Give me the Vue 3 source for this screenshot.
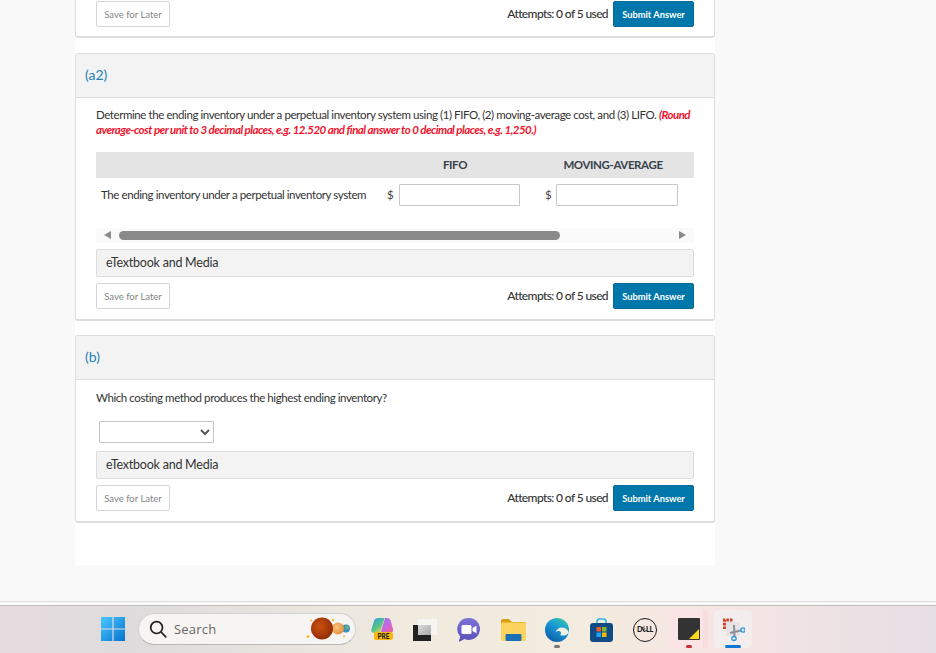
<template>
  <div class="page">
    <main class="column">
      <section class="card clipped">
        <div class="actions">
          <button class="save">Save for Later</button>
          <div class="submit-wrap">
            <span class="attempts">Attempts: 0 of 5 used</span>
            <button class="submit">Submit Answer</button>
          </div>
        </div>
      </section>

      <section class="card">
        <header class="card-head">(a2)</header>
        <div class="card-body">
          <p class="question">
            Determine the ending inventory under a perpetual inventory system using (1) FIFO, (2) moving-average cost, and (3) LIFO.
            <em class="hint">(Round</em><br />
            <em class="hint">average-cost per unit to 3 decimal places, e.g. 12.520 and final answer to 0 decimal places, e.g. 1,250.)</em>
          </p>
          <div class="table">
            <div class="thead">
              <span class="th fifo">FIFO</span>
              <span class="th moving">MOVING-AVERAGE</span>
            </div>
            <div class="trow">
              <span class="row-label">The ending inventory under a perpetual inventory system</span>
              <span class="dollar d1">$</span>
              <input class="cell c1" type="text" />
              <span class="dollar d2">$</span>
              <input class="cell c2" type="text" />
            </div>
            <div class="scrollbar">
              <span class="arrow left"></span>
              <span class="thumb"></span>
              <span class="arrow right"></span>
            </div>
          </div>
          <div class="media">eTextbook and Media</div>
          <div class="actions">
            <button class="save">Save for Later</button>
            <div class="submit-wrap">
              <span class="attempts">Attempts: 0 of 5 used</span>
              <button class="submit">Submit Answer</button>
            </div>
          </div>
        </div>
      </section>

      <section class="card">
        <header class="card-head">(b)</header>
        <div class="card-body">
          <p class="question single">Which costing method produces the highest ending inventory?</p>
          <select class="choice"><option></option></select>
          <div class="media">eTextbook and Media</div>
          <div class="actions">
            <button class="save">Save for Later</button>
            <div class="submit-wrap">
              <span class="attempts">Attempts: 0 of 5 used</span>
              <button class="submit">Submit Answer</button>
            </div>
          </div>
        </div>
      </section>
    </main>

    <div class="rule"></div>

    <footer class="taskbar">
      <svg class="win" width="24" height="24" viewBox="0 0 24 24">
        <defs>
          <linearGradient id="winGrad" x1="0" y1="0" x2="1" y2="1">
            <stop offset="0" stop-color="#4cc8fb" />
            <stop offset="1" stop-color="#0573d1" />
          </linearGradient>
        </defs>
        <path fill="url(#winGrad)" d="M0 0h11.4v11.4H0zM12.6 0H24v11.4H12.6zM0 12.6h11.4V24H0zM12.6 12.6H24V24H12.6z" />
      </svg>

      <div class="search">
        <svg width="20" height="20" viewBox="0 0 20 20" fill="none" stroke="#1d1d1d" stroke-width="1.7">
          <circle cx="8.6" cy="8.6" r="5.9" />
          <path d="M13 13l4.8 4.8" stroke-linecap="round" />
        </svg>
        <span class="search-text">Search</span>
        <svg class="planets" width="48" height="26" viewBox="0 0 48 26">
          <defs>
            <radialGradient id="mars" cx=".4" cy=".4" r=".7"><stop offset="0" stop-color="#c9500f" /><stop offset="1" stop-color="#8c2a05" /></radialGradient>
            <radialGradient id="venus" cx=".4" cy=".4" r=".7"><stop offset="0" stop-color="#f9c27b" /><stop offset="1" stop-color="#e58a35" /></radialGradient>
          </defs>
          <circle cx="44" cy="12.5" r="4" fill="#3a8fc4" />
          <circle cx="45" cy="11.5" r="2" fill="#5cb86a" />
          <circle cx="36" cy="12.5" r="6" fill="url(#venus)" />
          <circle cx="20" cy="12.5" r="11" fill="url(#mars)" />
          <g fill="#f1bf3e">
            <circle cx="6" cy="20.5" r="1.5" /><circle cx="9" cy="4.500" r="1" /><circle cx="31" cy="4" r="1.300" /><circle cx="42" cy="20.5" r="1" />
          </g>
        </svg>
      </div>

      <div class="tray">
        <div class="slot">
          <svg class="copilot" width="26" height="25" viewBox="0 0 26 25">
            <defs>
              <linearGradient id="cpA" x1="0" y1="0" x2=".7" y2="1"><stop offset="0" stop-color="#2a9be6" /><stop offset=".6" stop-color="#55c38a" /><stop offset="1" stop-color="#e9d24a" /></linearGradient>
              <linearGradient id="cpB" x1="0" y1="0" x2=".7" y2="1"><stop offset="0" stop-color="#8b7de8" /><stop offset=".6" stop-color="#c668e0" /><stop offset="1" stop-color="#ee5fa0" /></linearGradient>
            </defs>
            <path fill="url(#cpA)" d="M9 1h6.500L11 16H5C3 16 1.800 14.500 2.300 12.500L5 4C5.600 2 7 1 9 1z" />
            <path fill="url(#cpB)" d="M11.500 16L16 1h2c2 0 3.200 1 3.800 3L24 12c.5 2-.7 4-2.700 4z" />
            <rect x="5" y="15" width="19" height="8" rx="2" fill="#f7b90f" />
            <text x="14.500" y="21.600" text-anchor="middle" class="pre">PRE</text>
          </svg>
        </div>
        <div class="slot">
          <svg width="24" height="22" viewBox="0 0 24 22">
            <defs><linearGradient id="ovl" x1="0" y1="0" x2="1" y2="1"><stop offset="0" stop-color="#dcdcdc" /><stop offset="1" stop-color="#a8a8a8" /></linearGradient></defs>
            <rect x="5" y="0" width="19" height="16" fill="#f6f5f2" />
            <rect x="0" y="6" width="18" height="16" fill="#222" />
            <rect x="5" y="6" width="13" height="10" fill="url(#ovl)" />
          </svg>
        </div>
        <div class="slot">
          <svg width="24" height="25" viewBox="0 0 24 25">
            <defs><linearGradient id="tm" x1="0" y1="0" x2="0" y2="1"><stop offset="0" stop-color="#7d72d8" /><stop offset="1" stop-color="#5b52b8" /></linearGradient></defs>
            <path fill="url(#tm)" d="M12 1a11 11 0 1 1-4.600 21L3 24.500c-.7.300-1.200-.2-1-.8l1.200-4.300A11 11 0 0 1 12 1z" />
            <rect x="4.500" y="8" width="10" height="9" rx="1.500" fill="#fff" />
            <path fill="#fff" d="M15.500 11l4-2.300v7.600l-4-2.300z" />
          </svg>
        </div>
        <div class="slot">
          <svg width="25" height="22" viewBox="0 0 25 22">
            <path fill="#d9a010" d="M0 2c0-1 .7-2 2-2h6l3 3h12c1 0 2 .8 2 2v3H0z" />
            <rect x="0" y="3.500" width="25" height="18.500" rx="1.500" fill="#fcd35e" />
            <rect x="4.500" y="15" width="16" height="7" rx="1" fill="#1b6fb5" />
          </svg>
        </div>
        <div class="slot active-dot">
          <svg width="24" height="24" viewBox="0 0 24 24">
            <defs><linearGradient id="edge" x1=".8" y1="0" x2=".2" y2="1"><stop offset="0" stop-color="#35c7a8" /><stop offset=".4" stop-color="#1a9bd8" /><stop offset="1" stop-color="#0c59a4" /></linearGradient></defs>
            <circle cx="12" cy="12" r="12" fill="url(#edge)" />
            <path fill="#f2efe4" d="M24 15c-1-3.400-3.600-5.500-6.800-5.500-3.400 0-6 2-6.700 5 1.300-1.400 3.300-1.700 4.600-1.100 1.300.7 1.200 2.200.1 3.600 2.800 1.300 6.200.4 8.800-2z" />
          </svg>
          <span class="dot gray"></span>
        </div>
        <div class="slot">
          <svg width="23" height="24" viewBox="0 0 23 24">
            <path fill="none" stroke="#2bb6e8" stroke-width="1.600" d="M7 6V3.500C7 2 8 1 9.500 1h4C15 1 16 2 16 3.500V6" />
            <rect x="0" y="5" width="23" height="19" rx="3" fill="#0f4c86" />
            <rect x="6.500" y="9" width="4.500" height="4.500" fill="#ef5a28" />
            <rect x="12" y="9" width="4.500" height="4.500" fill="#7cb82f" />
            <rect x="6.500" y="14.500" width="4.500" height="4.500" fill="#18a5ef" />
            <rect x="12" y="14.500" width="4.500" height="4.500" fill="#ffb900" />
          </svg>
        </div>
        <div class="slot">
          <span class="dell">D<span class="dell-e">E</span>LL</span>
        </div>
        <div class="slot sticky">
          <span class="sticky-edge"></span>
          <svg width="22" height="22" viewBox="0 0 22 22">
            <rect width="22" height="22" rx="1" fill="#333" />
            <path fill="#fbd71d" d="M21 11V21H11z" />
          </svg>
          <span class="dot red"></span>
        </div>
        <div class="slot snip">
          <svg width="24" height="26" viewBox="0 0 24 26">
            <rect x="5" y="6" width="14" height="14" fill="#e6e3e6" />
            <path fill="none" stroke="#d2412c" stroke-width="3" stroke-dasharray="2.600 1" d="M3.500 13V4h9" />
            <path stroke="#8d8f94" stroke-width="2" d="M9 17l13-3M13 9l.5 13" />
            <circle cx="22" cy="14" r="2.800" fill="#3098e0" />
            <circle cx="13" cy="22.500" r="2.800" fill="#3098e0" />
            <path stroke="#fff" stroke-width="1" d="M20.500 14h3M22 12.500v3M11.500 22.500h3M13 21v3" />
          </svg>
          <span class="dot blue"></span>
        </div>
      </div>
    </footer>
  </div>
</template>

<script setup>
</script>

<style>
html, body { margin: 0; background: #f9f9f9; }
</style>

<style scoped>
.page {
  width: 936px;
  height: 653px;
  overflow: hidden;
  position: relative;
  background: #f9f9f9;
  font-family: Lato, "Liberation Sans", sans-serif;
  color: #333;
}
.column {
  width: 640px;
  height: 565px;
  margin-left: 75px;
  background: #fff;
  box-sizing: border-box;
}
.card {
  box-sizing: border-box;
  border: 1px solid #ddd;
  border-bottom-width: 2px;
  border-radius: 3px;
  background: #fff;
  margin-bottom: 14px;
}
.clipped {
  border-top: none;
  border-radius: 0 0 3px 3px;
  height: 38px;
  margin-bottom: 15px;
  padding: 1px 20px 0;
}
.card-head {
  height: 44px;
  box-sizing: border-box;
  padding: 12px 9px 0;
  background: #f3f3f3;
  border-bottom: 1px solid #ddd;
  color: #2a7fb8;
  font-size: 14px;
  line-height: 18px;
}
.card-body {
  padding: 9px 20px 10px;
}
.actions {
  display: flex;
  justify-content: space-between;
  align-items: center;
  height: 26px;
}
.save {
  width: 74px;
  height: 26px;
  padding: 0;
  box-sizing: border-box;
  background: #fff;
  border: 1px solid #d5d5d5;
  border-radius: 2px;
  font: 9.500px Lato, sans-serif;
  color: #858585;
}
.submit-wrap {
  display: flex;
  align-items: center;
  gap: 5px;
}
.attempts {
  font-size: 12px;
  font-weight: 500;
  color: #333;
  letter-spacing: -0.62px;
  padding-bottom: 2px;
}
.submit {
  width: 81px;
  height: 26px;
  padding: 0;
  background: #0077aa;
  border: 1px solid #006a98;
  border-radius: 2px;
  font: bold 9.300px Lato, sans-serif;
  color: #fff;
}
.question {
  margin: 0;
  width: 598px;
  font-size: 11.500px;
  line-height: 15px;
  letter-spacing: -0.42px;
  color: #333;
}
.question.single {
  height: 15px;
  margin-top: 1px;
  margin-bottom: 16px;
}
.hint {
  font-weight: 700;
  font-style: italic;
  color: #f0142d;
  letter-spacing: -0.52px;
}
.table {
  margin-top: 15px;
}
.thead {
  position: relative;
  height: 26px;
  background: #e4e4e4;
  font-size: 11.500px;
  font-weight: 700;
  line-height: 25px;
}
.th {
  position: absolute;
  top: 0;
  color: #39424a;
  transform: translateX(-50%);
  white-space: nowrap;
  letter-spacing: -0.4px;
}
.fifo { left: 359px; }
.moving { left: 517px; }
.trow {
  display: flex;
  align-items: center;
  height: 50px;
  padding-bottom: 16px;
  box-sizing: border-box;
  font-size: 11.500px;
  letter-spacing: -0.41px;
}
.row-label {
  width: 291px;
  padding: 0 0 2px 5px;
  white-space: nowrap;
  box-sizing: border-box;
}
.dollar { color: #444; font-size: 11.500px; padding-bottom: 2px; }
.d1 { width: 12px; }
.d2 { width: 11px; margin-left: 25px; }
.cell {
  height: 22px;
  box-sizing: border-box;
  border: 1px solid #c6c6c6;
  border-radius: 1px;
  background: #fff;
  padding: 0;
}
.c1 { width: 121px; }
.c2 { width: 122px; }
.scrollbar {
  position: relative;
  height: 15px;
  background: #fafafa;
}
.thumb {
  position: absolute;
  left: 23px;
  top: 3px;
  width: 441px;
  height: 9px;
  border-radius: 5px;
  background: #8a8a8a;
}
.arrow {
  position: absolute;
  top: 3px;
  width: 0;
  height: 0;
  border-top: 4.500px solid transparent;
  border-bottom: 4.500px solid transparent;
}
.arrow.left { left: 8px; border-right: 7px solid #8a8a8a; }
.arrow.right { right: 8px; border-left: 7px solid #8a8a8a; }
.media {
  height: 28px;
  box-sizing: border-box;
  margin: 6px 0;
  padding-left: 9px;
  border: 1px solid #ddd;
  border-radius: 2px;
  background: #f3f3f3;
  font-size: 12.500px;
  letter-spacing: -0.23px;
  line-height: 26px;
  color: #333;
}
.choice {
  display: block;
  margin: 0 0 8px 3px;
  width: 115px;
  height: 22px;
  background: #fff;
  border: 1px solid #c6c6c6;
  border-radius: 1px;
  color: #555;
}
.choice + .media { margin-top: 0; }
.rule {
  position: absolute;
  left: 0;
  right: 0;
  top: 601px;
  height: 1px;
  background: #dcdcdc;
}
.taskbar {
  position: absolute;
  left: 0;
  right: 0;
  bottom: 0;
  height: 48px;
  box-sizing: border-box;
  border-top: 1px solid #c2c0bf;
  display: flex;
  align-items: center;
  padding: 0 0 1px 101px;
  background: linear-gradient(90deg, #e6dcdf 0%, #dedbdd 14%, #f1ebdf 45%, #f3ecdf 62%, #f6e5e3 76%, #e6dfe5 100%);
}
.win { flex: none; }
.search {
  flex: none;
  display: flex;
  align-items: center;
  box-sizing: border-box;
  width: 218px;
  height: 32px;
  margin-left: 13px;
  padding-left: 9px;
  border: 1px solid #d2cfcc;
  border-bottom-color: #b9b6b3;
  border-radius: 16px;
  background: #f7f5f3;
  position: relative;
}
.search-text {
  margin-left: 6px;
  font: 13px "Open Sans", sans-serif;
  color: #666;
  letter-spacing: .2px;
}
.planets {
  position: absolute;
  right: 5px;
  top: 2px;
}
.tray {
  display: flex;
  margin-left: 3px;
  height: 100%;
}
.slot {
  position: relative;
  flex: none;
  width: 44px;
  height: 47px;
  display: flex;
  align-items: center;
  justify-content: center;
}
.copilot { margin-left: 1px; }
.pre {
  font: 900 6.500px Lato, sans-serif;
  fill: #222;
}
.dot {
  position: absolute;
  bottom: 5px;
  left: 50%;
  transform: translateX(-50%);
  height: 3px;
  border-radius: 2px;
}
.dot.gray { width: 6px; background: #777; }
.dot.red { width: 6px; left: 20px; bottom: 1px; background: #c9302c; }
.dot.blue { width: 16px; bottom: 0; background: #0f78d4; }
.dell {
  box-sizing: border-box;
  width: 24px;
  height: 24px;
  border: 1.500px solid #1a1a1a;
  border-radius: 50%;
  font: 900 7.200px/21px Lato, sans-serif;
  text-align: center;
  color: #1a1a1a;
  letter-spacing: -.3px;
}
.dell-e {
  display: inline-block;
  transform: rotate(-25deg);
}
.sticky {
  width: 34px;
  height: 40px;
  margin: 3px 0 0 2px;
  padding-left: 9px;
  box-sizing: border-box;
  justify-content: flex-start;
  border-radius: 4px;
  background: #fbe4e6;
}
.sticky-edge {
  position: absolute;
  top: 0;
  right: -5px;
  width: 5px;
  height: 40px;
  border-radius: 0 4px 4px 0;
  background: #f7dede;
}
.snip {
  width: 38px;
  height: 38px;
  margin: 4px 0 0 11px;
  border-radius: 4px;
  background: #f3edee;
}
</style>
